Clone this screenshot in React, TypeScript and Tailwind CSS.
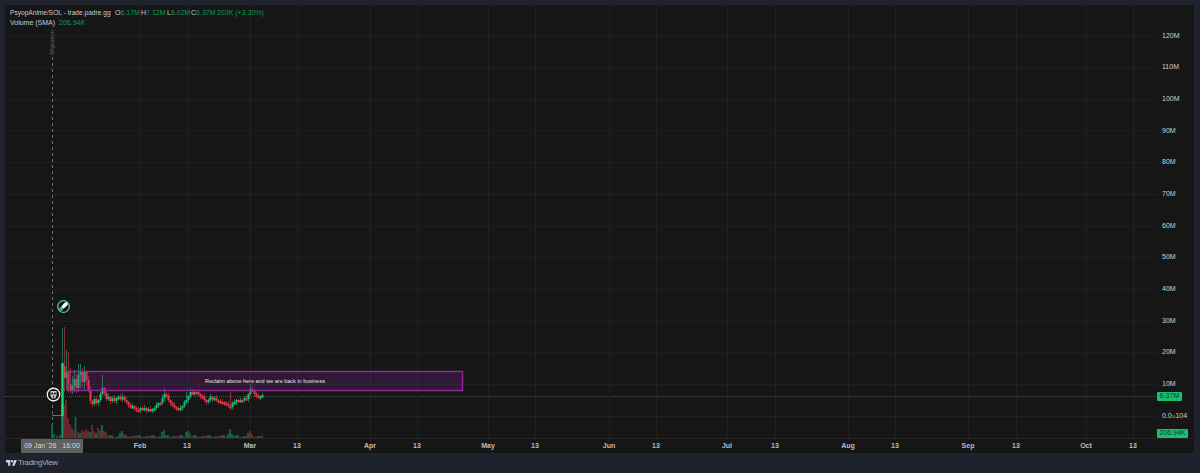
const hLines = [36, 67.7, 99.4, 131.1, 162.8, 194.5, 226.2, 257.9, 289.6, 321.3, 353, 384.7, 416.4];
const prices = ["120M", "110M", "100M", "90M", "80M", "70M", "60M", "50M", "40M", "30M", "20M", "10M"];
const ticks: [string, number][] = [
  ["Feb", 140], ["13", 187], ["Mar", 250], ["13", 297], ["Apr", 370], ["13", 417], ["May", 488], ["13", 535],
  ["Jun", 609], ["13", 656], ["Jul", 727], ["13", 775], ["Aug", 848], ["13", 895], ["Sep", 968], ["13", 1016],
  ["Oct", 1086], ["13", 1133],
];
const GREEN = "#16c172";
const RED = "#f0384a";
const early: [number, number, number, number, number][] = [
  [64, 366, 378, 327, 392], [66, 378, 372, 350, 390], [68, 372, 384, 352, 392], [70, 384, 390, 368, 394],
  [72, 390, 386, 376, 394], [74, 386, 379, 370, 392], [76, 379, 388, 374, 393], [78, 388, 375, 364, 392],
  [80, 375, 371, 364, 388], [82, 371, 382, 368, 388], [84, 382, 372, 366, 390], [86, 372, 380, 370, 386],
  [88, 380, 390, 376, 392], [90, 390, 401, 386, 404],
];
const closes: [number, number][] = [
  [92, 404], [94, 399], [96, 403], [98, 400], [100, 394], [102, 388], [104, 393], [106, 399], [108, 397], [110, 401],
  [112, 398], [114, 401], [116, 398], [118, 397], [120, 399], [122, 397], [124, 400], [126, 402], [128, 405], [130, 407],
  [132, 406], [134, 408], [136, 410], [138, 410], [140, 408], [142, 409], [144, 408], [146, 410], [148, 409], [150, 410],
  [152, 409], [154, 408], [156, 405], [158, 403], [160, 403], [162, 398], [164, 394], [166, 396], [168, 400], [170, 403],
  [172, 405], [174, 407], [176, 408], [178, 409], [180, 408], [182, 406], [184, 402], [186, 400], [188, 396], [190, 392],
  [192, 393], [194, 392], [196, 392], [198, 394], [200, 396], [202, 397], [204, 400], [206, 402], [208, 400], [210, 397],
  [212, 399], [214, 398], [216, 400], [218, 401], [220, 402], [222, 402], [224, 403], [226, 404], [228, 406], [230, 407],
  [232, 403], [234, 402], [236, 400], [238, 401], [240, 400], [242, 400], [244, 398], [246, 399], [248, 394], [250, 389],
  [252, 390], [254, 394], [256, 396], [258, 397], [260, 396], [262, 395],
];
const tallWicks: Record<number, number> = { 102: 375, 164: 388, 190: 388, 230: 392, 250: 384, 122: 393, 186: 392 };
const candles: [number, number, number, number, number][] = [...early];
closes.forEach(([x, c], i) => {
  const o = i === 0 ? 401 : closes[i - 1][1];
  const h = tallWicks[x] ?? Math.min(o, c) - 1 - (i % 3);
  const l = Math.max(o, c) + 1 + ((i * 7) % 3 === 0 ? 2 : 1);
  candles.push([x, o, c, h, l]);
});
const volumes: [number, number, boolean][] = [
  [52, 425, true], [54, 434, true], [57, 436, true], [60, 435, true], [64.5, 405, false], [66, 400, false], [68, 418, false], [70, 424, false],
  [72, 428, false], [74, 431, false], [75.5, 417, true], [78, 432, false], [80, 433, true], [82, 430, false], [84, 432, false], [86, 429, false],
  [88, 431, false], [90, 432, true], [92, 425, false], [94, 431, false], [96, 433, true], [98, 428, false], [100, 430, false], [102, 425, true], [104, 431, false], [106, 432, false],
];
for (let x = 108; x <= 262; x += 2) {
  const special: Record<number, [number, boolean]> = {
    120: [433, true], 122: [431, true], 124: [434, false], 162: [432, true], 164: [430, true], 186: [432, true], 188: [431, true], 190: [433, false],
    228: [434, true], 230: [429, true], 232: [434, true], 248: [433, true], 250: [431, false], 252: [434, false],
  };
  const s = special[x];
  volumes.push([x, s ? s[0] : 435 + ((x * 3) % 7) / 3, s ? s[1] : (x * 5) % 14 < 5]);
}
const sans = "font-['Liberation_Sans',Arial,sans-serif]";

function Chart() {
  return (
    <svg className="absolute inset-0" width="1152" height="433" viewBox="5 5 1152 433">
      {hLines.map((y) => <line key={y} x1="5" x2="1157" y1={y} y2={y} stroke="#212122" />)}
      {ticks.map(([t, x]) => <line key={x} x1={x + 0.5} x2={x + 0.5} y1="5" y2="438" stroke="#212122" />)}
      <line x1="52.5" x2="52.5" y1="57" y2="438" stroke="#6f6f6f" strokeDasharray="3 3" />
      <rect x="61.3" y="404" width="2.4" height="34" fill="#0f9560" />
      {volumes.map(([x, y, up], i) => (
        <rect key={i} x={x - 0.9} y={y} width="1.8" height={438 - y} fill={up ? "#0e6b47" : "#6e2a30"} />
      ))}
      <line x1="5" x2="1157" y1="396.5" y2="396.5" stroke="#11704a" strokeDasharray="1 1" />
      <line x1="52" x2="62" y1="415.5" y2="415.5" stroke={GREEN} opacity="0.8" />
      <line x1="62.5" x2="62.5" y1="328" y2="416" stroke="#16694a" />
      <rect x="61.3" y="363" width="2.4" height="53" fill="#14d67a" />
      {candles.map(([x, o, c, h, l]) => {
        const up = c < o;
        const top = Math.min(o, c);
        return (
          <g key={x}>
            <line x1={x + 0.5} x2={x + 0.5} y1={h} y2={l} stroke={up ? "#1a7a55" : "#8a2c36"} />
            <rect x={x - 0.5} y={top} width="2" height={Math.max(Math.abs(o - c), 2.4)} fill={up ? GREEN : RED} />
          </g>
        );
      })}
      <rect x="67.5" y="371.5" width="395" height="19" fill="#9c27b0" fillOpacity="0.2" stroke="#96289f" strokeWidth="1.4" />
      <circle cx="63.5" cy="306.5" r="5.8" fill="#141414" stroke="#52c98d" strokeWidth="1.3" />
      <path d="M60.8 309.2 L66 304" stroke="#3fb57f" strokeWidth="3.4" strokeLinecap="round" />
      <path d="M63.6 306.4 L66 304" stroke="#ffffff" strokeWidth="3.4" strokeLinecap="round" />
      <circle cx="53.5" cy="394.5" r="6.2" fill="#0c0c0c" stroke="#f0f0f0" strokeWidth="1.4" />
      <path d="M50.4 391 H56.6 V395.4 L55.2 398.4 H51.8 L50.4 395.4 Z" fill="#c4c4c4" />
      <circle cx="52.1" cy="393.6" r="1" fill="#111111" />
      <circle cx="54.9" cy="393.6" r="1" fill="#111111" />
      <path d="M53.5 395 V398.4" stroke="#111111" strokeWidth="0.7" />
    </svg>
  );
}

function TimeAxis() {
  return (
    <div className="relative flex h-[15px] items-center border-t border-[#262627] bg-[#161616] text-[7px] font-bold text-[#bdbdbd]">
      {ticks.map(([t, x], i) => (
        <div
          key={x}
          className="flex w-0 shrink-0 justify-center whitespace-nowrap"
          style={{ marginLeft: i === 0 ? x - 5 : x - ticks[i - 1][1] }}
        >
          {t}
        </div>
      ))}
      <div className="absolute left-[16px] top-0 flex h-[14px] w-[62px] items-center justify-center gap-[6px] bg-[#5f5f5f] text-[7px] font-normal text-[#dcdcdc]">
        <span>09 Jan '26</span>
        <span>16:00</span>
      </div>
    </div>
  );
}

export default function App() {
  return (
    <div className={`h-[473px] w-[1200px] overflow-hidden bg-[#1e222d] pl-[5px] pr-[6px] pt-[5px] ${sans}`}>
      <div className="flex h-[448px] flex-col bg-[#161616]">
        <div className="flex h-[433px]">
          <div className="relative w-[1152px] shrink-0">
            <Chart />
            <div className="absolute left-[5px] top-[3px] whitespace-nowrap text-[7px] leading-[10px] text-[#c9cbd1]">
              <div className="flex">
                <span className="w-[105px] text-[6.6px]">PsyopAnime/SOL - trade.padre.gg</span>
                <span className="w-[26px]">O<span className="text-[#0b9c5d]">6.17M</span></span>
                <span className="w-[26px]">H<span className="text-[#0b9c5d]">7.12M</span></span>
                <span className="w-[24px]">L<span className="text-[#0b9c5d]">6.02M</span></span>
                <span className="w-[26px]">C<span className="text-[#0b9c5d]">6.37M</span></span>
                <span className="text-[#0b9c5d]">203K (+3.30%)</span>
              </div>
              <div>
                Volume (SMA) <span className="ml-[2px] text-[#0b9c5d]">206.94K</span>
              </div>
            </div>
            <div className="absolute left-[44px] top-[24px] flex h-[27px] w-[6px] items-center justify-center">
              <span className="-rotate-90 whitespace-nowrap text-[6px] text-[#6a6a6a]">Migration</span>
            </div>
            <div className="absolute left-[62.5px] top-[367px] flex h-[19px] w-[395px] items-center justify-center whitespace-nowrap text-[5.5px] text-[#ebe3ee]">
              Reclaim above here and we are back in business
            </div>
          </div>
          <div className="relative flex-1 pl-[5px] pt-[15px] text-[7px] text-[#d2d2d2]">
            {prices.map((p) => (
              <div key={p} className="flex h-[31.7px] items-center">{p}</div>
            ))}
            <div className="flex h-[31.7px] items-center whitespace-nowrap">
              0.0<span className="text-[5px]">₁₆</span>104
            </div>
            <div className="absolute left-0 top-[387px] flex h-[9px] w-[25px] items-center justify-center rounded-[1px] bg-[#16c172] text-[7px] text-[#0f3d27]">
              6.37M
            </div>
            <div className="absolute left-0 top-[424px] flex h-[9px] w-[31px] items-center justify-center rounded-[1px] bg-[#16c172] text-[7px] text-[#0f3d27]">
              206.94K
            </div>
          </div>
        </div>
        <TimeAxis />
      </div>
      <div className="flex h-[20px] items-center gap-[1px] pl-[1px] text-[8px] tracking-[-0.4px] text-[#a9acb5]">
        <svg width="11" height="8" viewBox="0 0 36 26" fill="#d1d4dc">
          <path d="M14 22H7V11H0V3h14v19zM28 22h-8l7.5-19h8L28 22z" />
          <circle cx="20" cy="7" r="4" />
        </svg>
        <span>TradingView</span>
      </div>
    </div>
  );
}
